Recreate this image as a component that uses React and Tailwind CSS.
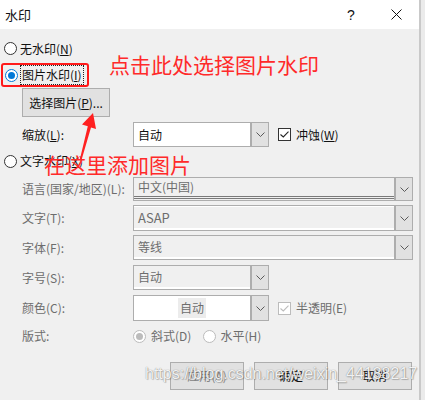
import React from 'react';

const ui = "font-['Noto_Sans_CJK_SC',sans-serif]";

const Chevron = ({ color = '#5a5a5a' }) => (
  <svg width="9" height="5" viewBox="0 0 9 5" fill="none">
    <path d="M0.5 0.5 L4.5 4.5 L8.5 0.5" stroke={color} strokeWidth="1" />
  </svg>
);

const Radio = ({ checked, disabled }) => {
  if (disabled) {
    return (
      <span className="w-[13px] h-[13px] rounded-full border border-[#bcbcbc] bg-white flex items-center justify-center shrink-0">
        {checked && <span className="w-[7px] h-[7px] rounded-full bg-[#bcbcbc]" />}
      </span>
    );
  }
  if (checked) {
    return (
      <span className="w-[13px] h-[13px] rounded-full border border-[#0078d7] bg-white flex items-center justify-center shrink-0">
        <span className="w-[7px] h-[7px] rounded-full bg-[#0078d7]" />
      </span>
    );
  }
  return <span className="w-[13px] h-[13px] rounded-full border border-[#333] bg-white shrink-0" />;
};

const Check = ({ disabled }) => (
  <span className={disabled
    ? 'w-[13px] h-[13px] border border-[#bcbcbc] bg-white flex items-center justify-center shrink-0'
    : 'w-[13px] h-[13px] border border-[#333] bg-white flex items-center justify-center shrink-0'}>
    <svg width="9" height="7" viewBox="0 0 9 7" fill="none">
      <path d="M0.5 3.5 L3.3 6 L8.5 0.6" stroke={disabled ? '#bcbcbc' : '#222'} strokeWidth="1.1" />
    </svg>
  </span>
);

// label column + combobox row
const Row = ({ label, className, children }) => (
  <div className={`flex items-center pl-[22px] ${className}`}>
    <span className="w-[111px] text-[#6d6d6d]">{label}</span>
    {children}
  </div>
);

const DropBtn = () => (
  <div className="w-[18px] h-full bg-[#e1e1e1] border-l-2 border-[#adadad] flex items-center justify-center">
    <Chevron />
  </div>
);

export default function App() {
  return (
    <div className={`w-[425px] h-[400px] flex bg-[#ebebeb] text-[12px] leading-none text-[#111] ${ui}`}>
      <div className="w-[419px] h-full flex flex-col">
        {/* title bar */}
        <div className="h-[29px] bg-white flex items-center pl-[5px] pr-[8px]">
          <span className="flex-1 text-[13px]">水印</span>
          <span className="w-[30px] text-center text-[14px] font-['Liberation_Sans',sans-serif]">?</span>
          <span className="w-[30px] ml-[15px] flex justify-center">
            <svg width="11" height="11" viewBox="0 0 11 11">
              <path d="M0.5 0.5 L10.5 10.5 M10.5 0.5 L0.5 10.5" stroke="#111" strokeWidth="1" />
            </svg>
          </span>
        </div>

        {/* body */}
        <div className="flex-1 bg-[#f0f0f0] relative flex flex-col">
          <div className="mt-[11px] h-[17px] flex items-center pl-[4px] gap-[3px]">
            <Radio />
            <span>无水印(<span className="underline">N</span>)</span>
          </div>

          <div className="mt-[6px] ml-[1px] w-[88px] h-[24px] border-2 border-[#ff1a1a] rounded-[3px] flex items-center pl-[2px]">
            <Radio checked />
            <span className="ml-[2px] px-[1px] py-[3px] border border-dotted border-[#222]">图片水印(<span className="underline">I</span>)</span>
          </div>

          <div className="mt-[1px] ml-[22px] w-[88px] h-[29px] border border-[#adadad] bg-[#e1e1e1] flex items-center justify-center">
            选择图片(<span className="underline">P</span>)...
          </div>

          <div className="mt-[5px] h-[25px] flex items-center pl-[22px]">
            <span className="w-[111px]">缩放(<span className="underline">L</span>):</span>
            <div className="w-[136px] h-full border border-[#adadad] bg-white flex">
              <span className="flex-1 flex items-center pl-[4px]">自动</span>
              <DropBtn />
            </div>
            <span className="ml-[9px]"><Check /></span>
            <span className="ml-[5px]">冲蚀(<span className="underline">W</span>)</span>
          </div>

          <div className="mt-[6px] h-[16px] flex items-center pl-[4px] gap-[3px]">
            <Radio />
            <span>文字水印(<span className="underline">X</span>)</span>
          </div>

          <Row label="语言(国家/地区)(L):" className="mt-[8px] h-[24px]">
            <div className="w-[280px] h-full border border-[#adadad] bg-[#f0f0f0] flex">
              <div className="flex-1 mb-[1px] border-b-[3px] border-double border-[#7a7a7a] flex items-center pl-[4px] text-[#6d6d6d]">中文(中国)</div>
              <DropBtn />
            </div>
          </Row>

          <Row label="文字(T):" className="mt-[4px] h-[26px]">
            <div className="w-[280px] h-full border border-[#adadad] bg-[#f0f0f0] flex">
              <div className="flex-1 border-t border-b-2 border-white flex items-center pl-[4px] text-[#6d6d6d] text-[13px]">ASAP</div>
              <DropBtn />
            </div>
          </Row>

          <Row label="字体(F):" className="mt-[4px] h-[25px]">
            <div className="w-[280px] h-full border border-[#adadad] bg-[#f0f0f0] flex">
              <div className="flex-1 border-b-2 border-white flex items-center pl-[4px] text-[#6d6d6d]">等线</div>
              <DropBtn />
            </div>
          </Row>

          <Row label="字号(S):" className="mt-[5px] h-[25px]">
            <div className="w-[136px] h-full border border-[#adadad] bg-[#f0f0f0] flex">
              <div className="flex-1 border-b-2 border-white flex items-center pl-[4px] text-[#6d6d6d]">自动</div>
              <DropBtn />
            </div>
          </Row>

          <Row label="颜色(C):" className="mt-[5px] h-[26px]">
            <div className="w-[136px] h-full border border-[#adadad] bg-white flex">
              <div className="flex-1 flex items-center justify-center">
                <span className="bg-[#ececec] px-[2px] py-[4px] text-[#6d6d6d]">自动</span>
              </div>
              <DropBtn />
            </div>
            <span className="ml-[9px]"><Check disabled /></span>
            <span className="ml-[5px] text-[#6d6d6d]">半透明(E)</span>
          </Row>

          <Row label="版式:" className="mt-[7px] h-[16px]">
            <Radio checked disabled />
            <span className="ml-[5px] text-[#6d6d6d]">斜式(D)</span>
            <span className="ml-[12px]"><Radio disabled /></span>
            <span className="ml-[4px] text-[#6d6d6d]">水平(H)</span>
          </Row>

          <div className="mt-[18px] h-[28px] flex justify-end gap-[10px] pr-[7px]">
            <div className="w-[74px] h-full border border-[#adadad] bg-[#e1e1e1] flex items-center justify-center text-[#838383]">应用(A)</div>
            <div className="w-[74px] h-full border border-[#adadad] bg-[#e1e1e1] flex items-center justify-center">确定</div>
            <div className="w-[74px] h-full border border-[#adadad] bg-[#e1e1e1] flex items-center justify-center">取消</div>
          </div>

          {/* annotations */}
          <div className="absolute left-[109px] top-[25px] text-[21px] leading-[21px] text-[#ff2a2a]">点击此处选择图片水印</div>
          <div className="absolute left-[44px] top-[125px] text-[21px] leading-[21px] text-[#ff2a2a]">在这里添加图片</div>
          <svg className="absolute left-0 top-0 pointer-events-none" width="419" height="371" viewBox="0 29 419 371">
            <polygon points="93,113 96,129 91,127.4 81.5,160 79.8,159.6 87.8,126.2 82,124.5" fill="#ff2020" />
          </svg>
          <div className="absolute left-[145px] top-[335px] text-[16px] leading-[20px] text-white/90 font-['Liberation_Sans',sans-serif] [text-shadow:0_0_1px_rgba(0,0,0,0.5),1px_1px_1px_rgba(0,0,0,0.2)]">https://blog.csdn.net/weixin_44138217</div>
        </div>
      </div>
      <div className="w-[2px] h-full bg-[#c9c9c9]" />
    </div>
  );
}
